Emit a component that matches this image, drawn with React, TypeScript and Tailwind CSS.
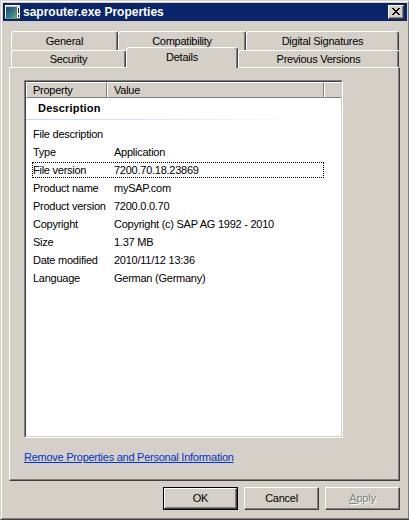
import React from 'react';

const rows: [string, string][] = [
  ['File description', ''],
  ['Type', 'Application'],
  ['File version', '7200.70.18.23869'],
  ['Product name', 'mySAP.com'],
  ['Product version', '7200.0.0.70'],
  ['Copyright', 'Copyright (c) SAP AG 1992 - 2010'],
  ['Size', '1.37 MB'],
  ['Date modified', '2010/11/12 13:36'],
  ['Language', 'German (Germany)'],
];

function AppIcon() {
  return (
    <svg width="16" height="16" viewBox="0 0 16 16" shapeRendering="crispEdges">
      <defs>
        <linearGradient id="scr" x1="0" y1="0" x2="1" y2="1">
          <stop offset="0" stopColor="#1c3f8c" />
          <stop offset="0.55" stopColor="#2f7d86" />
          <stop offset="1" stopColor="#6fb27a" />
        </linearGradient>
      </defs>
      <rect x="0" y="1" width="15" height="14" fill="#c8c8c8" />
      <rect x="0" y="1" width="15" height="1" fill="#ffffff" />
      <rect x="0" y="1" width="1" height="14" fill="#ffffff" />
      <rect x="1" y="3" width="11" height="11" fill="url(#scr)" />
      <rect x="12" y="3" width="3" height="11" fill="#ffffff" />
      <rect x="13" y="4" width="1" height="5" fill="#1a1a1a" />
      <rect x="13" y="11" width="1" height="2" fill="#1a1a1a" />
      <rect x="0" y="14" width="15" height="1" fill="#808080" />
    </svg>
  );
}

function CloseGlyph() {
  const px = [
    '11....11',
    '.11..11.',
    '..1111..',
    '...11...',
    '..1111..',
    '.11..11.',
    '11....11',
  ];
  return (
    <svg width="8" height="7" viewBox="0 0 8 7" shapeRendering="crispEdges">
      {px.map((line, y) =>
        line.split('').map((c, x) =>
          c === '1' ? <rect key={`${x}-${y}`} x={x} y={y} width="1" height="1" fill="#000" /> : null
        )
      )}
    </svg>
  );
}

function TitleBar() {
  return (
    <div className="h-[18px] bg-[#0a246a] flex items-center pl-[2px]">
      <AppIcon />
      <span className="ml-[2px] text-white font-bold text-[12px] tracking-normal leading-none">
        saprouter.exe Properties
      </span>
      <div className="ml-auto mr-[3px] w-[16px] h-[14px] bg-[#d4d0c8] border border-t-white border-l-white border-r-[#404040] border-b-[#404040] shadow-[inset_-1px_-1px_0_#808080] flex items-center justify-center pb-[1px]">
        <CloseGlyph />
      </div>
    </div>
  );
}

function Tabs() {
  const tab =
    'h-full flex items-center justify-center bg-[#d4d0c8] border-t border-l border-r border-t-white border-l-white border-r-[#404040] shadow-[inset_-1px_0_0_#808080] rounded-t-[3px]';
  return (
    <div className="mt-[10px] flex flex-col">
      <div className="flex h-[19px] ml-[8px]">
        <div className={`${tab} w-[107px]`}>General</div>
        <div className={`${tab} w-[128px]`}>Compatibility</div>
        <div className={`${tab} w-[153px]`}>Digital Signatures</div>
      </div>
      <div className="flex items-end h-[17px] ml-[8px]">
        <div className={`${tab} w-[115px]`}>Security</div>
        <div className="relative z-10 w-[112px] h-[21px] -mb-[1px] pb-[1px] flex items-center justify-center bg-[#d4d0c8] border-t border-l border-r border-t-white border-l-white border-r-[#404040] shadow-[inset_-1px_0_0_#808080] rounded-t-[3px]">
          Details
        </div>
        <div className={`${tab} w-[161px]`}>Previous Versions</div>
      </div>
    </div>
  );
}

function DetailsList() {
  return (
    <div className="w-[319px] h-[358px] border border-t-[#808080] border-l-[#808080] border-r-white border-b-white">
      <div className="h-full border border-t-[#404040] border-l-[#404040] border-r-[#d4d0c8] border-b-[#d4d0c8] bg-white flex flex-col">
        <div className="flex h-[16px]">
          <div className="w-[81px] bg-[#d4d0c8] border-t border-l border-t-white border-l-white border-r border-b border-r-[#808080] border-b-[#808080] pl-[6px] flex items-center">
            Property
          </div>
          <div className="w-[217px] bg-[#d4d0c8] border-t border-l border-t-white border-l-white border-r border-b border-r-[#808080] border-b-[#808080] pl-[6px] flex items-center">
            Value
          </div>
          <div className="flex-1 bg-[#d4d0c8] border-t border-l border-t-white border-l-white border-b border-b-[#808080]" />
        </div>
        <div className="h-[21px] pl-[12px] flex items-center font-bold tracking-[0.2px]">Description</div>
        <div className="w-[277px] h-[1px] bg-gradient-to-r from-[#c4d8f1] via-[#dde8f7] to-white" />
        <div className="mt-[6px] flex flex-col">
          {rows.map(([k, v], i) => (
            <div key={k} className="h-[18px] pl-[6px]">
              <div
                className={`w-[292px] h-[16px] flex items-center border ${
                  i === 2 ? 'border-dotted border-black' : 'border-transparent'
                }`}
              >
                <span className="w-[81px] shrink-0 whitespace-nowrap">{k}</span>
                <span className="whitespace-nowrap">{v}</span>
              </div>
            </div>
          ))}
        </div>
      </div>
    </div>
  );
}

function Button({ label, def, disabled }: { label: React.ReactNode; def?: boolean; disabled?: boolean }) {
  const face =
    'h-full w-full bg-[#d4d0c8] border border-t-white border-l-white border-r-[#404040] border-b-[#404040] shadow-[inset_-1px_-1px_0_#808080] flex items-center justify-center';
  return (
    <div className={`w-[75px] h-[23px] ${def ? 'border border-black' : ''}`}>
      <div className={`${face} ${disabled ? 'text-[#808080] [text-shadow:1px_1px_0_#ffffff]' : ''}`}>{label}</div>
    </div>
  );
}

export default function App() {
  return (
    <div className="w-[409px] h-[520px] overflow-hidden bg-[#d4d0c8] font-['Liberation_Sans',Arial,sans-serif] text-[11px] leading-[13px] text-black tracking-[-0.25px] select-none">
      <div className="w-[410px] h-[520px] border border-t-[#d4d0c8] border-l-[#d4d0c8] border-r-[#404040] border-b-[#404040]">
        <div className="h-full border border-t-white border-l-white border-r-[#808080] border-b-[#808080] p-[1px] flex flex-col">
          <TitleBar />
          <Tabs />
          <div className="ml-[6px] w-[391px] h-[414px] bg-[#d4d0c8] border border-t-white border-l-white border-r-[#404040] border-b-[#404040] shadow-[inset_-1px_-1px_0_#808080] flex flex-col pt-[12px] pl-[14px]">
            <DetailsList />
            <a className="mt-[12px] self-start leading-[14px] text-[#0033cc] underline cursor-pointer">
              Remove Properties and Personal Information
            </a>
          </div>
          <div className="ml-[6px] w-[391px] mt-[6px] flex justify-end gap-[6px]">
            <Button label="OK" def />
            <Button label="Cancel" />
            <Button
              label={
                <span>
                  <span className="underline">A</span>pply
                </span>
              }
              disabled
            />
          </div>
        </div>
      </div>
    </div>
  );
}
